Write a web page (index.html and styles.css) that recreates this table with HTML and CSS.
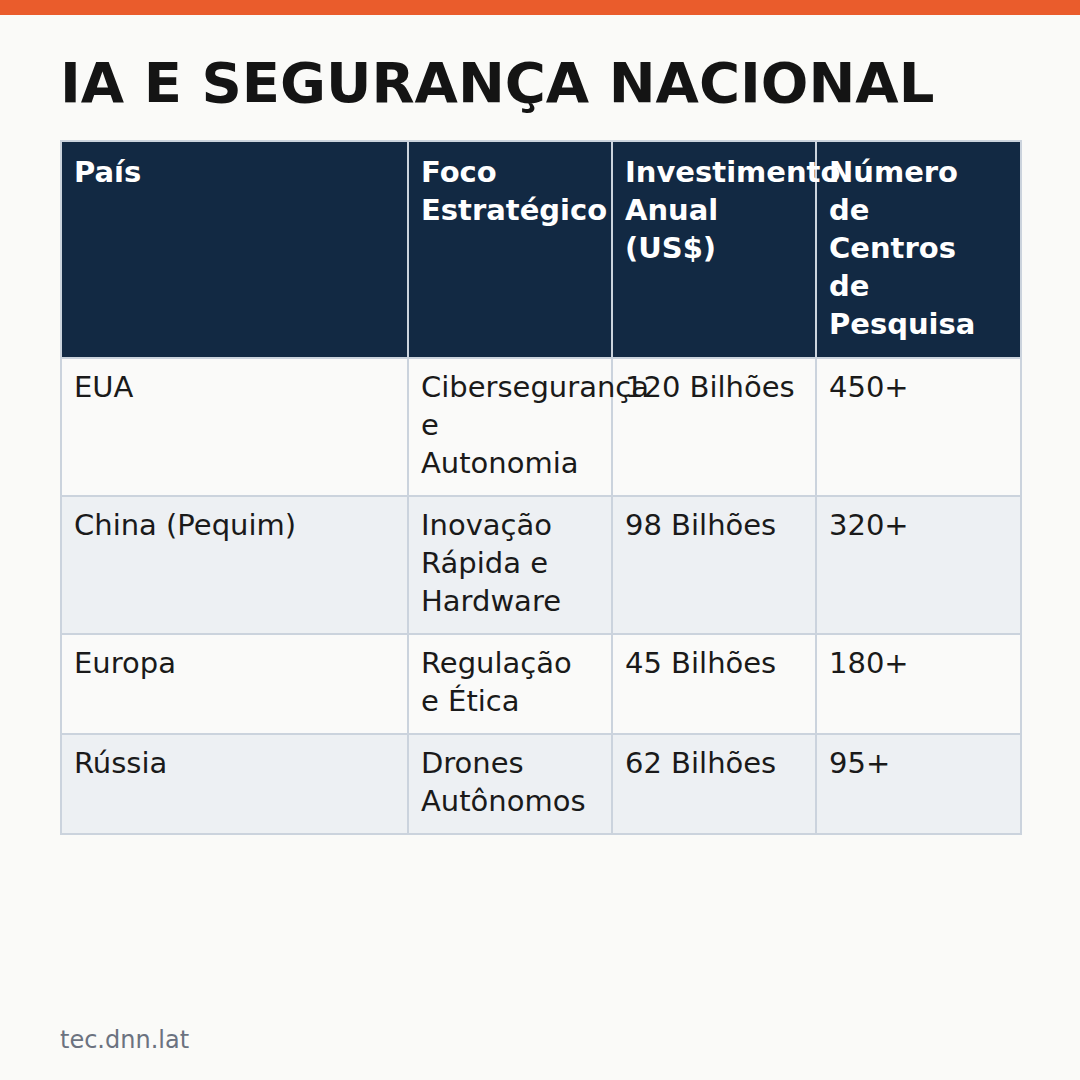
FILE: index.html
```html
<!DOCTYPE html>
<html lang="pt">
<head>
<meta charset="utf-8">
<link rel="stylesheet" href="styles.css">
</head>
<body>
<div class="topbar"></div>
<main class="page">
  <h1 class="title">IA E SEGURANÇA NACIONAL</h1>
  <table class="data">
    <colgroup>
      <col class="c1"><col class="c2"><col class="c3"><col class="c4">
    </colgroup>
    <thead>
      <tr><th>País</th><th>Foco Estratégico</th><th>Investimento Anual (US$)</th><th>Número de Centros de Pesquisa</th></tr>
    </thead>
    <tbody>
      <tr><td>EUA</td><td>Cibersegurança e Autonomia</td><td>120 Bilhões</td><td>450+</td></tr>
      <tr class="alt"><td>China (Pequim)</td><td>Inovação Rápida e Hardware</td><td>98 Bilhões</td><td>320+</td></tr>
      <tr><td>Europa</td><td>Regulação e Ética</td><td>45 Bilhões</td><td>180+</td></tr>
      <tr class="alt"><td>Rússia</td><td>Drones Autônomos</td><td>62 Bilhões</td><td>95+</td></tr>
    </tbody>
  </table>
  <div class="spacer"></div>
  <footer class="footer">tec.dnn.lat</footer>
</main>
</body>
</html>
```
FILE: styles.css
```css
html, body { margin: 0; padding: 0; }
body {
  width: 1080px; height: 1080px; overflow: hidden;
  background: #fafaf8;
  font-family: "DejaVu Sans", sans-serif;
  color: #1a1a1a;
  display: flex; flex-direction: column;
}
.topbar { height: 15px; background: #ea5c2c; flex: none; }
.page {
  flex: 1;
  display: flex; flex-direction: column;
  padding: 0 60px;
}
.title {
  margin: 36px 0 25px;
  font-size: 56px; font-weight: bold; line-height: 64px;
  color: #141414;
}
.data {
  width: 961px;
  table-layout: fixed;
  border-collapse: collapse;
  font-size: 29px;
  line-height: 38px;
}
.c1 { width: 347px; }
.c2, .c3 { width: 204px; }
.c4 { width: 205px; }
.data th, .data td {
  border: 2px solid #cbd3dd;
  text-align: left; vertical-align: top;
  overflow: visible;
}
.data th {
  padding: 11px 14px 14px 12px;
  background: #122943; color: #ffffff; font-weight: bold;
}
.data td {
  padding: 9px 14px 13px 12px;
  background: #fafaf9;
}
.data tr.alt td { background: #edf0f3; }
.spacer { flex: 1; }
.footer { font-size: 24px; color: #6b7280; margin-bottom: 26px; }
```
